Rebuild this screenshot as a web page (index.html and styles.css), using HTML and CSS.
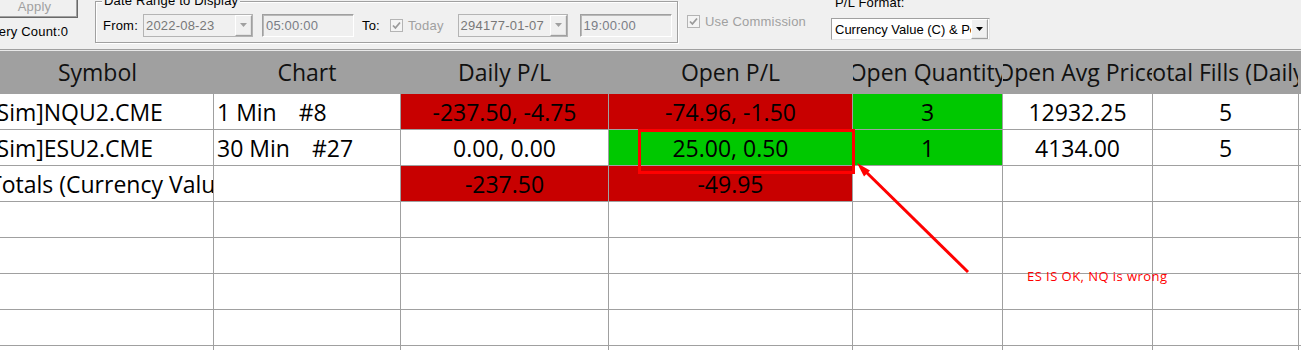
FILE: index.html
```html
<!DOCTYPE html>
<html lang="en">
<head>
    <meta charset="UTF-8">
    <meta name="viewport" content="width=device-width, initial-scale=1.0">
    <title>Account Performance</title>
    <link rel="stylesheet" href="styles.css">
</head>
<body>

<div class="window">
    <div class="toolbar">
        <div class="apply-block">
            <button class="btn" disabled>Apply</button>
            <div class="query-count">Query Count:0</div>
        </div>

        <div class="group">
            <span class="group-title">Date Range to Display</span>
            <span class="lbl">From:</span>
            <div class="combo disabled from-date">
                <span class="combo-text">2022-08-23</span>
                <span class="drop"><svg width="7" height="4" viewBox="0 0 7 4"><path d="M0 0 H7 L3.5 4 Z" fill="#a0a0a0"/></svg></span>
            </div>
            <div class="timebox from-time">05:00:00</div>
            <span class="lbl to">To:</span>
            <span class="check today-check">
                <svg width="13" height="13" viewBox="0 0 13 13"><rect x="0.5" y="0.5" width="12" height="12" fill="#f4f4f4" stroke="#b4b4b4"/><path d="M3 6.5 L5.4 9 L10 3.5" fill="none" stroke="#9a9a9a" stroke-width="1.8"/></svg>
            </span>
            <span class="lbl muted today">Today</span>
            <div class="combo disabled to-date">
                <span class="combo-text">294177-01-07</span>
                <span class="drop"><svg width="7" height="4" viewBox="0 0 7 4"><path d="M0 0 H7 L3.5 4 Z" fill="#a0a0a0"/></svg></span>
            </div>
            <div class="timebox to-time">19:00:00</div>
        </div>

        <div class="commission">
            <span class="check">
                <svg width="13" height="13" viewBox="0 0 13 13"><rect x="0.5" y="0.5" width="12" height="12" fill="#f4f4f4" stroke="#b4b4b4"/><path d="M3 6.5 L5.4 9 L10 3.5" fill="none" stroke="#9a9a9a" stroke-width="1.8"/></svg>
            </span>
            <span class="lbl muted">Use Commission</span>
        </div>

        <div class="plformat">
            <div class="lbl plformat-title">P/L Format:</div>
            <div class="combo pl-combo">
                <span class="combo-text">Currency Value (C) &amp; Percent (%)</span>
                <span class="drop"><svg width="7" height="4" viewBox="0 0 7 4"><path d="M0 0 H7 L3.5 4 Z" fill="#000"/></svg></span>
            </div>
        </div>
    </div>

    <div class="grid">
        <div class="cell head">Symbol</div>
        <div class="cell head">Chart</div>
        <div class="cell head">Daily P/L</div>
        <div class="cell head">Open P/L</div>
        <div class="cell head">Open Quantity</div>
        <div class="cell head">Open Avg Price</div>
        <div class="cell head">Total Fills (Daily)</div>
        <div class="cell head"></div>

        <div class="cell sym">[Sim]NQU2.CME</div>
        <div class="cell chart">1 Min<span class="chart-no">#8</span></div>
        <div class="cell loss">-237.50, -4.75</div>
        <div class="cell loss">-74.96, -1.50</div>
        <div class="cell gain">3</div>
        <div class="cell">12932.25</div>
        <div class="cell">5</div>
        <div class="cell"></div>

        <div class="cell sym">[Sim]ESU2.CME</div>
        <div class="cell chart">30 Min<span class="chart-no">#27</span></div>
        <div class="cell">0.00, 0.00</div>
        <div class="cell gain">25.00, 0.50</div>
        <div class="cell gain">1</div>
        <div class="cell">4134.00</div>
        <div class="cell">5</div>
        <div class="cell"></div>

        <div class="cell sym">Totals (Currency Value)</div>
        <div class="cell"></div>
        <div class="cell loss">-237.50</div>
        <div class="cell loss">-49.95</div>
        <div class="cell"></div>
        <div class="cell"></div>
        <div class="cell"></div>
        <div class="cell"></div>

        <div class="cell"></div><div class="cell"></div><div class="cell"></div><div class="cell"></div>
        <div class="cell"></div><div class="cell"></div><div class="cell"></div><div class="cell"></div>

        <div class="cell"></div><div class="cell"></div><div class="cell"></div><div class="cell"></div>
        <div class="cell"></div><div class="cell"></div><div class="cell"></div><div class="cell"></div>

        <div class="cell"></div><div class="cell"></div><div class="cell"></div><div class="cell"></div>
        <div class="cell"></div><div class="cell"></div><div class="cell"></div><div class="cell"></div>

        <div class="cell"></div><div class="cell"></div><div class="cell"></div><div class="cell"></div>
        <div class="cell"></div><div class="cell"></div><div class="cell"></div><div class="cell"></div>

        <div class="cell"></div><div class="cell"></div><div class="cell"></div><div class="cell"></div>
        <div class="cell"></div><div class="cell"></div><div class="cell"></div><div class="cell"></div>
    </div>

    <!-- hand-drawn markup on top of the screenshot -->
    <svg class="markup" width="1301" height="350" viewBox="0 0 1301 350">
        <rect x="639.5" y="130.5" width="214" height="42" fill="none" stroke="#ff0000" stroke-width="3"/>
        <line x1="968" y1="272" x2="862" y2="168" stroke="#ff0000" stroke-width="3"/>
        <polygon points="857,163 870,170.5 864,176.5" fill="#ff0000"/>
    </svg>
    <span class="note">ES IS OK, NQ is wrong</span>
</div>

</body>
</html>
```

FILE: styles.css
```css
body {
    margin: 0;
    background: #f0f0f0;
    overflow: hidden;
    font-family: "Liberation Sans", Arial, sans-serif;
    font-size: 13px;
}
.window {
    position: relative;
    width: 1301px;
    height: 350px;
    overflow: hidden;
}

/* top control strip */
.toolbar {
    display: flex;
    align-items: flex-start;
    height: 49px;
    border-bottom: 1px solid #a0a0a0;
    box-shadow: 0 1px 0 #e8e8e8;
    margin-bottom: 1px;
    letter-spacing: 0.2px;
}
.apply-block {
    margin-left: -9px;
    width: 87px;
    flex-shrink: 0;
}
.btn {
    display: block;
    box-sizing: border-box;
    width: 87px;
    height: 23px;
    margin-top: -5px;
    padding: 0;
    background: #f0f0f0;
    border: 1px solid;
    border-color: #ffffff #696969 #696969 #ffffff;
    box-shadow: inset -1px -1px 0 #a0a0a0;
    font-family: "Liberation Sans", Arial, sans-serif;
    font-size: 13px;
    letter-spacing: 0.2px;
    color: #a0a0a0;
}
.query-count {
    margin-top: 6px;
    margin-left: -10px;
    line-height: 15px;
    white-space: nowrap;
    color: #000;
}
.lbl {
    line-height: 15px;
    white-space: nowrap;
    color: #000;
}
.muted {
    color: #a0a0a0;
}

.group {
    position: relative;
    box-sizing: border-box;
    display: flex;
    align-items: center;
    flex-shrink: 0;
    width: 583px;
    height: 42px;
    margin-left: 17px;
    margin-top: 1px;
    padding: 6px 0 0 7px;
    border: 1px solid #a0a0a0;
    box-shadow: inset 1px 1px 0 #ffffff, 1px 1px 0 #ffffff;
}
.group-title {
    position: absolute;
    left: 6px;
    top: -9px;
    padding: 0 2px;
    line-height: 15px;
    background: #f0f0f0;
    white-space: nowrap;
}

.combo {
    box-sizing: border-box;
    display: flex;
    align-items: center;
    flex-shrink: 0;
    height: 23px;
    border: 1px solid #b4b4b4;
    overflow: hidden;
}
.combo.disabled {
    width: 110px;
    background: #f0f0f0;
    color: #787878;
}
.combo-text {
    flex: 1;
    padding-left: 2px;
    white-space: nowrap;
    overflow: hidden;
}
.drop {
    box-sizing: border-box;
    display: flex;
    align-items: center;
    justify-content: center;
    width: 17px;
    height: 21px;
    flex-shrink: 0;
    background: #f0f0f0;
    border: 1px solid;
    border-color: #ffffff #a0a0a0 #a0a0a0 #ffffff;
    box-shadow: inset -1px -1px 0 #e3e3e3;
}
.from-date {
    margin-left: 5px;
}
.to-date {
    margin-left: 14px;
}
.timebox {
    box-sizing: border-box;
    flex-shrink: 0;
    width: 92px;
    height: 23px;
    padding: 3px 0 0 3px;
    line-height: 15px;
    border: 1px solid;
    border-color: #a0a0a0 #ffffff #ffffff #a0a0a0;
    box-shadow: inset 1px 1px 0 #b9b9b9;
    color: #7a7d86;
}
.from-time {
    margin-left: 9px;
}
.to-time {
    margin-left: 12px;
}
.to {
    margin-left: 8px;
}
.check {
    display: flex;
    flex-shrink: 0;
}
.today-check {
    margin-left: 10px;
}
.today {
    margin-left: 5px;
}

.commission {
    display: flex;
    align-items: center;
    flex-shrink: 0;
    width: 144px;
    margin-left: 9px;
    margin-top: 14px;
}
.commission .lbl {
    margin-left: 5px;
}

.plformat {
    flex-shrink: 0;
}
.plformat-title {
    margin-top: -5px;
    margin-left: 4px;
}
.pl-combo {
    width: 159px;
    height: 22px;
    margin-top: 8px;
    background: #ffffff;
    border-color: #a0a0a0 #e3e3e3 #e3e3e3 #a0a0a0;
    color: #000;
    letter-spacing: 0;
}
.pl-combo .combo-text {
    padding-left: 3px;
}
.pl-combo .drop {
    height: 20px;
    margin-right: 1px;
}

/* data grid */
.grid {
    display: grid;
    grid-template-columns: 231px 186px 207px 243px 149px 149px 145px 20px;
    grid-template-rows: 42px;
    grid-auto-rows: 35px;
    gap: 1px;
    margin-left: -18px;
    background: #a0a0a0;
    font-family: "Open Sans", "Noto Sans", sans-serif;
    font-size: 23px;
    color: #000;
}
.cell {
    display: flex;
    align-items: center;
    justify-content: center;
    overflow: hidden;
    white-space: pre;
    background: #ffffff;
}
.head {
    background: #a0a0a0;
    color: #111;
}
.sym {
    justify-content: flex-start;
    padding-left: 7px;
}
.chart {
    justify-content: flex-start;
    padding-left: 3px;
}
.chart-no {
    margin-left: 22px;
}
.loss {
    background: #c80000;
}
.gain {
    background: #00c800;
}

.markup {
    position: absolute;
    left: 0;
    top: 0;
    pointer-events: none;
}
.note {
    position: absolute;
    left: 1027px;
    top: 267px;
    font-family: "Open Sans", "Noto Sans", sans-serif;
    font-size: 13px;
    letter-spacing: 0.45px;
    color: #ff0000;
    white-space: nowrap;
}
```
